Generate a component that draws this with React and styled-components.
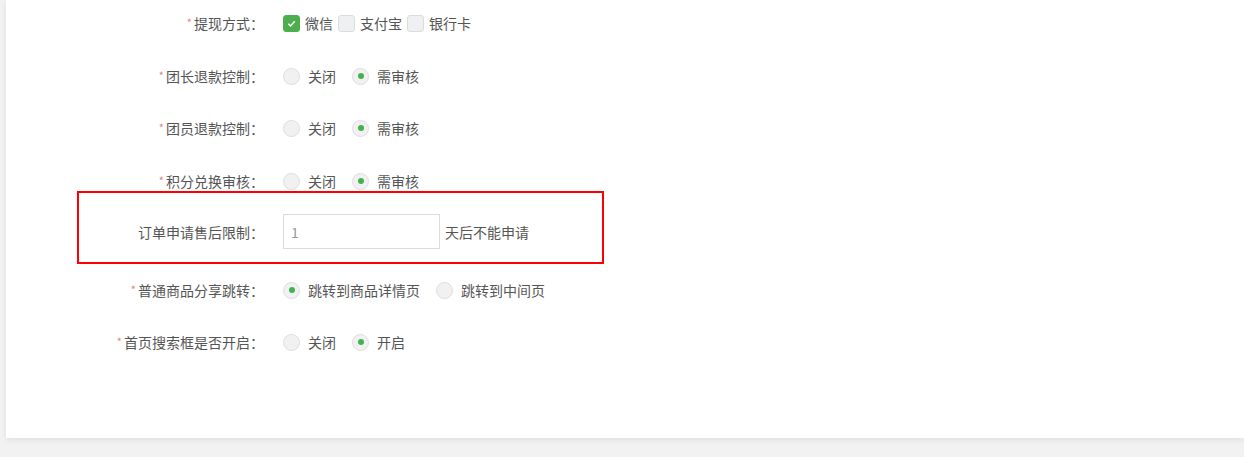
import React, { useState } from "react";
import styled, { createGlobalStyle } from "styled-components";

const GlobalStyle = createGlobalStyle`
  html, body {
    margin: 0;
    padding: 0;
    background: #f2f2f2;
  }
  body {
    font-family: "Noto Sans CJK SC", "Liberation Sans", sans-serif;
    font-size: 14px;
    color: #555;
  }
`;

const Page = styled.div`
  width: 1244px;
  height: 457px;
  overflow: hidden;
  padding-left: 6px;
  box-sizing: border-box;
`;

const Panel = styled.div`
  background: #fff;
  height: 438px;
  box-shadow: 0 2px 6px rgba(0, 0, 0, 0.08);
  padding: 13px 0 0 73px;
  box-sizing: border-box;
  display: flex;
  flex-direction: column;
`;

const Row = styled.div`
  display: flex;
  align-items: center;
  height: 20px;
  margin-top: ${(p) => p.$mt || 0}px;
`;

const Label = styled.div`
  width: 185px;
  text-align: right;
  white-space: nowrap;
  color: #555;
  line-height: 20px;
  flex-shrink: 0;
`;

const Star = styled.span`
  color: #f37b7b;
  font-size: 11px;
  vertical-align: top;
  margin-right: 2px;
  position: relative;
  top: -1px;
`;

const Colon = styled.span`
  margin-left: 0;
`;

const Controls = styled.div`
  display: flex;
  align-items: center;
  margin-left: 19px;
`;

const Choice = styled.label`
  display: flex;
  align-items: center;
  margin-right: ${(p) => p.$gap}px;
  cursor: pointer;
  color: #555;
  white-space: nowrap;
`;

const RadioDot = styled.span`
  width: 15px;
  height: 15px;
  border-radius: 50%;
  border: 1px solid #dedede;
  background: #f1f1f1;
  display: flex;
  align-items: center;
  justify-content: center;
  margin-right: 8px;
  &::after {
    content: "";
    width: 6px;
    height: 6px;
    border-radius: 50%;
    background: ${(p) => (p.$on ? "#3fb34f" : "transparent")};
  }
`;

const CheckBox = styled.span`
  width: 15px;
  height: 15px;
  border-radius: 3px;
  border: 1px solid ${(p) => (p.$on ? "#4cae4c" : "#dcdcdc")};
  background: ${(p) => (p.$on ? "#4cae4c" : "#eef0f2")};
  display: flex;
  align-items: center;
  justify-content: center;
  margin-right: 5px;
`;

const Highlight = styled.div`
  width: 523px;
  margin-left: -2px;
  border: 2px solid #ff0000;
  padding: 21px 0 13px;
  display: flex;
  align-items: center;
`;

const Input = styled.input`
  width: 157px;
  height: 35px;
  box-sizing: border-box;
  border: 1px solid #dcdcdc;
  padding: 0 7px;
  font: inherit;
  color: #999;
  outline: none;
`;

const Suffix = styled.span`
  margin-left: 5px;
  color: #555;
`;

function Radios({ options, value, onChange }) {
  return (
    <Controls>
      {options.map((o) => (
        <Choice key={o} $gap={16} onClick={() => onChange(o)}>
          <RadioDot $on={value === o} />
          {o}
        </Choice>
      ))}
    </Controls>
  );
}

function Check() {
  return (
    <svg width="11" height="11" viewBox="0 0 12 12">
      <path d="M2.5 6.2l2.4 2.4 4.6-5" fill="none" stroke="#fff" strokeWidth="1.6" />
    </svg>
  );
}

function FieldLabel({ required, children }) {
  return (
    <Label>
      {required && <Star>*</Star>}
      {children}
      <Colon>：</Colon>
    </Label>
  );
}

export default function App() {
  const [pay, setPay] = useState(["微信"]);
  const [vals, setVals] = useState({
    leader: "需审核",
    member: "需审核",
    points: "需审核",
    share: "跳转到商品详情页",
    search: "开启",
  });
  const [days, setDays] = useState("1");
  const set = (k) => (v) => setVals({ ...vals, [k]: v });
  const toggle = (o) =>
    setPay(pay.includes(o) ? pay.filter((x) => x !== o) : [...pay, o]);

  return (
    <Page>
      <GlobalStyle />
      <Panel>
        <Row>
          <FieldLabel required>提现方式</FieldLabel>
          <Controls>
            {["微信", "支付宝", "银行卡"].map((o) => (
              <Choice key={o} $gap={5} onClick={() => toggle(o)}>
                <CheckBox $on={pay.includes(o)}>{pay.includes(o) && <Check />}</CheckBox>
                {o}
              </Choice>
            ))}
          </Controls>
        </Row>
        <Row $mt={33}>
          <FieldLabel required>团长退款控制</FieldLabel>
          <Radios options={["关闭", "需审核"]} value={vals.leader} onChange={set("leader")} />
        </Row>
        <Row $mt={32}>
          <FieldLabel required>团员退款控制</FieldLabel>
          <Radios options={["关闭", "需审核"]} value={vals.member} onChange={set("member")} />
        </Row>
        <Row $mt={33}>
          <FieldLabel required>积分兑换审核</FieldLabel>
          <Radios options={["关闭", "需审核"]} value={vals.points} onChange={set("points")} />
        </Row>
        <Highlight>
          <FieldLabel>订单申请售后限制</FieldLabel>
          <Controls>
            <Input value={days} onChange={(e) => setDays(e.target.value)} />
            <Suffix>天后不能申请</Suffix>
          </Controls>
        </Highlight>
        <Row $mt={16}>
          <FieldLabel required>普通商品分享跳转</FieldLabel>
          <Radios
            options={["跳转到商品详情页", "跳转到中间页"]}
            value={vals.share}
            onChange={set("share")}
          />
        </Row>
        <Row $mt={32}>
          <FieldLabel required>首页搜索框是否开启</FieldLabel>
          <Radios options={["关闭", "开启"]} value={vals.search} onChange={set("search")} />
        </Row>
      </Panel>
    </Page>
  );
}
